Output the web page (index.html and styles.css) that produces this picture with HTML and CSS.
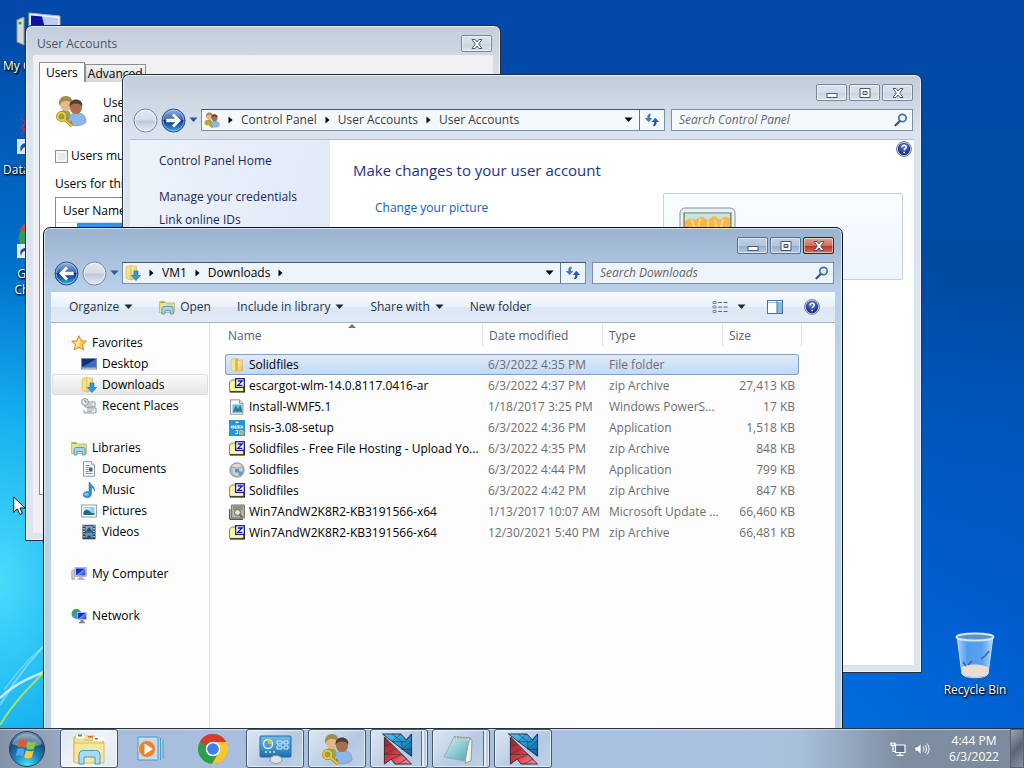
FILE: index.html
```
<!DOCTYPE html>
<html lang="en">
<head>
    <meta charset="UTF-8">
    <meta name="viewport" content="width=device-width, initial-scale=1.0">
    <title>Desktop</title>
    <link rel="stylesheet" href="styles.css">
</head>
<body>

<!-- shared icons -->
<svg class="defs" aria-hidden="true">
    <defs>
        <linearGradient id="gFolder" x1="0" y1="0" x2="1" y2="1"><stop offset="0" stop-color="#fdf3b4"/><stop offset="1" stop-color="#e3bf4e"/></linearGradient>
        <linearGradient id="gBlue" x1="0" y1="0" x2="0" y2="1"><stop offset="0" stop-color="#6fc0ea"/><stop offset="1" stop-color="#1a6fb5"/></linearGradient>
        <linearGradient id="gScreen" x1="0" y1="0" x2="1" y2="1"><stop offset="0" stop-color="#0a1fb0"/><stop offset="0.45" stop-color="#1733c8"/><stop offset="0.5" stop-color="#6d8ff0"/><stop offset="1" stop-color="#1d2fae"/></linearGradient>
        <linearGradient id="gNav" x1="0" y1="0" x2="0" y2="1"><stop offset="0" stop-color="#9ab8dc"/><stop offset="0.45" stop-color="#3a67b0"/><stop offset="0.5" stop-color="#0d2f86"/><stop offset="1" stop-color="#36b4f0"/></linearGradient>
        <linearGradient id="gNavOff" x1="0" y1="0" x2="0" y2="1"><stop offset="0" stop-color="#e4eaf1"/><stop offset="0.48" stop-color="#d3dce7"/><stop offset="0.52" stop-color="#bdc9d7"/><stop offset="1" stop-color="#e6edf5"/></linearGradient>
        <radialGradient id="gHelp" cx="0.5" cy="0.3" r="0.7"><stop offset="0" stop-color="#5f7fe0"/><stop offset="1" stop-color="#16237e"/></radialGradient>
        <radialGradient id="gOrb" cx="0.5" cy="0.95" r="0.95"><stop offset="0" stop-color="#4fe0ff"/><stop offset="0.4" stop-color="#1686bd"/><stop offset="0.75" stop-color="#1c4c77"/><stop offset="1" stop-color="#7c9cb8"/></radialGradient>
        <linearGradient id="gNote" x1="0" y1="0" x2="1" y2="1"><stop offset="0" stop-color="#d9f1f2"/><stop offset="1" stop-color="#4fa5b5"/></linearGradient>
        <linearGradient id="gGlass" x1="0" y1="0" x2="1" y2="0"><stop offset="0" stop-color="#a9d0f8"/><stop offset="0.3" stop-color="#4f9cec"/><stop offset="0.7" stop-color="#5aa2ee"/><stop offset="1" stop-color="#b8dafa"/></linearGradient>
        <linearGradient id="gBirdBlue" x1="0" y1="0" x2="1" y2="1"><stop offset="0" stop-color="#5ccdf2"/><stop offset="0.5" stop-color="#1f9ad6"/><stop offset="1" stop-color="#12578f"/></linearGradient>
        <linearGradient id="gBirdRed" x1="0" y1="0" x2="1" y2="1"><stop offset="0" stop-color="#8e2230"/><stop offset="0.5" stop-color="#dc3540"/><stop offset="1" stop-color="#f597a0"/></linearGradient>
    </defs>
    <symbol id="i-back" viewBox="0 0 25 25">
        <circle cx="12.5" cy="12.5" r="11.5" fill="url(#gNav)" stroke="#2c4f82"/>
        <circle cx="12.5" cy="12.5" r="10.3" fill="none" stroke="#a8c8ea" stroke-opacity=".7"/>
        <path d="M5 12.5l7-7 2 2-3.300 3.300h9v3.400h-9l3.300 3.300-2 2z" fill="#fff"/>
    </symbol>
    <symbol id="i-fwd" viewBox="0 0 25 25">
        <circle cx="12.5" cy="12.5" r="11.5" fill="url(#gNav)" stroke="#2c4f82"/>
        <circle cx="12.5" cy="12.5" r="10.3" fill="none" stroke="#a8c8ea" stroke-opacity=".7"/>
        <path d="M20 12.5l-7-7-2 2 3.300 3.300h-9v3.400h9L11 17.500l2 2z" fill="#fff"/>
    </symbol>
    <symbol id="i-off" viewBox="0 0 25 25">
        <circle cx="12.5" cy="12.5" r="11.5" fill="url(#gNavOff)" stroke="#75859a"/>
        <circle cx="12.5" cy="12.5" r="10.3" fill="none" stroke="#fff" stroke-opacity=".6"/>
    </symbol>
    <symbol id="i-down" viewBox="0 0 9 6"><path d="M.5.5h8l-4 4.500z"/></symbol>
    <symbol id="i-arrow" viewBox="0 0 5 8"><path d="M.5.5v7l4-3.500z" fill="#000"/></symbol>
    <symbol id="i-refresh" viewBox="0 0 16 14">
        <path d="M6.500.8C3.800.8 3.300 2.500 3.300 5H.7l4 4.200L8.300 5H6c0-1.700 0-2.500.9-2.500z" fill="#3f7fc4"/>
        <path d="M9.200 13.200c2.700 0 3.400-1.700 3.400-4.200h2.600l-4-4.200L7.700 9h2.500c0 1.600-.2 2.500-1 2.500z" fill="#2b5ca4"/>
    </symbol>
    <symbol id="i-search" viewBox="0 0 14 14">
        <circle cx="8.500" cy="5" r="3.700" fill="#e8f4fc" stroke="#3e74a8" stroke-width="1.700"/>
        <path d="M5.800 7.900L1.500 12.300" stroke="#3b5785" stroke-width="2.200" stroke-linecap="round"/>
    </symbol>
    <symbol id="i-help" viewBox="0 0 16 16">
        <circle cx="8" cy="8" r="7.400" fill="#d9dfea" stroke="#6e7a92"/>
        <circle cx="8" cy="8" r="6.200" fill="url(#gHelp)"/>
        <path d="M5.900 6.400c0-2.900 4.300-2.700 4.300-.2 0 1.500-2 1.500-2 3M8.200 10.700v1.500" fill="none" stroke="#fff" stroke-width="1.500"/>
    </symbol>
    <symbol id="i-users" viewBox="0 0 32 32">
        <path d="M4 24c0-7 2-9 6-9s6 2 6 9c-3 3-9 3-12 0z" fill="#7fae5c"/>
        <path d="M5 9c0-5 3-7 6-7s6 2 6 7c0 3-2 7-6 7s-6-4-6-7z" fill="#e3b98c"/>
        <path d="M4 11C3 4 7 1 11 1s8 3 6 10c-1-4-3-5-6-5s-5 1-7 5z" fill="#a58a4c"/>
        <path d="M13 29c0-8 3-11 9-11s9 3 9 9c-2 4-14 5-18 2z" fill="#8fb6e8" stroke="#5f88c0" stroke-width=".6"/>
        <path d="M15 12c0-4 3-6 6-6s6 2 6 6-2 7-6 7-6-3-6-7z" fill="#a8704a"/>
        <path d="M14.500 12c-.5-5 3-7.500 6.500-7.500s7 2.500 6.200 7C26 9.500 24 8.500 21 8.500s-4.500.5-6.500 3.500z" fill="#4b3c36"/>
        <circle cx="6.500" cy="21.500" r="3.800" fill="none" stroke="#b07f14" stroke-width="3.200"/>
        <path d="M9 24l8 7M14 29l2.500-2.500" stroke="#b07f14" stroke-width="3"/>
        <circle cx="6.500" cy="21.500" r="3.800" fill="none" stroke="#f4c33a" stroke-width="2"/>
        <path d="M9 24l8 7" stroke="#f4c33a" stroke-width="1.800"/>
    </symbol>
    <symbol id="i-folder" viewBox="0 0 16 16">
        <path d="M2 2.500l4.500-1v13L2 13z" fill="#f8e592" stroke="#d7b64c" stroke-width=".5"/>
        <path d="M6.500 1.500h2.800l1 12-3.800 1z" fill="#dcb541"/>
        <path d="M8.500 3.500l5-.8v10.800l-5 1.300z" fill="url(#gFolder)" stroke="#cfae45" stroke-width=".5"/>
    </symbol>
    <symbol id="i-download" viewBox="0 0 16 16">
        <path d="M1 1.500l5-1V15l-5-1.200z" fill="#f5e08a" stroke="#d0aa40" stroke-width=".5"/>
        <path d="M6 .5l5.500.8v12.500L6 15z" fill="url(#gFolder)" stroke="#d0aa40" stroke-width=".5"/>
        <path d="M9 6h4v4.500h2.500L11 15.500l-4.500-5H9z" fill="#2f9be0" stroke="#1866a0" stroke-width=".6"/>
    </symbol>
    <symbol id="i-library" viewBox="0 0 16 16">
        <path d="M.6 2.500h5l1 1.500h8.800v9.500H.6z" fill="#f4e28c" stroke="#c0a344" stroke-width=".7"/>
        <path d="M1.500 3h3.500l.8 1H1.500z" fill="#62b34c"/>
        <path d="M7 5h7.500v3H7z" fill="#c4e2a5"/>
        <path d="M3 15V9.500C3 8 4 7.500 5 7.500h7c1.500 0 2.200.8 2.200 2V15h-2.800v-3.500H6V15z" fill="#a0d4ef" stroke="#468fb5" stroke-width=".8"/>
    </symbol>
    <symbol id="i-star" viewBox="0 0 16 16">
        <path d="M8 .8l2.200 4.900 5.200.5-3.900 3.500 1.200 5.300L8 12.200 3.300 15l1.200-5.300L.6 6.200l5.200-.5z" fill="#ffc94a" stroke="#d4792b" stroke-width=".9"/>
        <path d="M8 3l1.300 3.500L8 11 4.600 13l1-3.700L3 7.200l3.400-.5z" fill="#ffe99a"/>
    </symbol>
    <symbol id="i-desktop" viewBox="0 0 16 16">
        <rect x=".5" y="2.500" width="15" height="10.500" fill="#3a6cc8" stroke="#7d8da3"/>
        <path d="M1 3h14L4 9.500l-3 1z" fill="#15306e"/>
        <rect x="1" y="11.500" width="14" height="1.500" fill="#a9b8c9"/>
    </symbol>
    <symbol id="i-recent" viewBox="0 0 16 16">
        <path d="M4 4h10v5H4zM6 10h9v5H3v-3" fill="#f2f4f6" stroke="#8f979f"/>
        <path d="M6.500 6h5M6.500 8h6M6 12h7M6 13.500h5" stroke="#a3abb3"/>
        <circle cx="4" cy="4" r="3.400" fill="#e9edf1" stroke="#808a94" stroke-width=".9"/>
        <path d="M4 2v2h1.700" stroke="#59636d" fill="none" stroke-width=".8"/>
    </symbol>
    <symbol id="i-doc" viewBox="0 0 16 16">
        <path d="M2.500.8h8l3 3v11.400h-11z" fill="#fbfcfd" stroke="#8b959f"/>
        <path d="M10.500.8v3h3" fill="#dde4ea" stroke="#8b959f" stroke-width=".7"/>
        <path d="M4.500 4.500h4M4.500 6.500h3M4.500 8.500h3M4.500 10.500h3M4.500 12.500h7" stroke="#808b95"/>
        <rect x="8" y="6.500" width="3.500" height="4" fill="#4c5d6e"/>
    </symbol>
    <symbol id="i-music" viewBox="0 0 16 16">
        <path d="M9 .3c.3 3 5 3.500 4.500 8.700-.7-2.300-1.600-3.200-3-3.500v6.200c0 5-8.300 5-8.300 1.200 0-2.600 3.400-4 5.800-2.900V.3z" fill="#2f8fd8" stroke="#1d65a8" stroke-width=".5"/>
        <ellipse cx="5.500" cy="12.300" rx="2.400" ry="1.500" fill="#7fc4ef"/>
    </symbol>
    <symbol id="i-picture" viewBox="0 0 16 16">
        <rect x=".6" y="2" width="14.800" height="12" fill="#fff" stroke="#8d9aa7"/>
        <rect x="2.500" y="4" width="11" height="8" fill="#8fd0ee"/>
        <path d="M2.500 9c3-3 5-2 7 0s3 1 4 1v2h-11z" fill="#1d6f80"/>
        <path d="M2.500 6.500c3-2 5-1 7 0" stroke="#fff" fill="none"/>
    </symbol>
    <symbol id="i-video" viewBox="0 0 16 16">
        <rect x="1.500" y=".8" width="13" height="14.500" fill="#2f3c4b"/>
        <rect x="4.300" y="1.800" width="7.400" height="5.600" fill="#6dabdc"/>
        <rect x="4.300" y="8.600" width="7.400" height="5.600" fill="#5596cc"/>
        <path d="M3 1.500v13M13 1.500v13" stroke="#e4eaf0" stroke-width="1.300" stroke-dasharray="1.300 1.300"/>
        <path d="M5 7l3-4 3 4M5 14l3-3 3 3" fill="#2b4a6b"/>
    </symbol>
    <symbol id="i-computer" viewBox="0 0 16 16">
        <path d="M.8 4.500l2.500-.8v10L.8 13z" fill="#cfd3c8" stroke="#888d86" stroke-width=".6"/>
        <rect x="4" y="1.500" width="11.500" height="9" fill="#dfe3ea" stroke="#8c95a6" stroke-width=".6"/>
        <rect x="5" y="2.500" width="9.500" height="7" fill="url(#gScreen)"/>
        <path d="M8 10.500h4v2h2v1.500H6.500v-1.500H8z" fill="#b4bac4"/>
    </symbol>
    <symbol id="i-network" viewBox="0 0 16 16">
        <circle cx="5.500" cy="6" r="5" fill="#3d9bd0"/>
        <path d="M2 3c2-3 5-2 6-1L6 4 4 7 2 8 1 5zM5 8l3 1-1 2z" fill="#3aa352"/>
        <rect x="6.500" y="4.500" width="9" height="7" fill="url(#gScreen)" stroke="#c3cad6" stroke-width=".8"/>
        <path d="M9.500 12h3v2h1.500v1.200H8V14h1.500z" fill="#6c7ba0"/>
    </symbol>
    <symbol id="i-zip" viewBox="0 0 16 16">
        <path d="M.6 4l2-2h4v2h8v9.400H.6z" fill="#fbf9a0" stroke="#77773a" stroke-width=".9"/>
        <path d="M1 14h14.300V5" fill="none" stroke="#000" stroke-width="1.100"/>
        <rect x="6.600" y=".7" width="8.700" height="8.700" fill="#fff" stroke="#1a1a9a" stroke-width="1.300"/>
        <path d="M8.700 3h4.500L8.800 7.300h4.600" fill="none" stroke="#1616a8" stroke-width="1.300"/>
    </symbol>
    <symbol id="i-script" viewBox="0 0 16 16">
        <path d="M1.500.8h9l3.500 3.500v11H1.500z" fill="#f4f7fa" stroke="#8f9ba8"/>
        <path d="M10.500.8v3.500H14" fill="none" stroke="#8f9ba8"/>
        <rect x="3.500" y="5.500" width="10" height="8.500" fill="#79bdd0"/>
        <path d="M4.500 13l2.500-5 2 4 2-4 1.800 5M6 11.500h6" stroke="#21708c" fill="none" stroke-width="1.300"/>
    </symbol>
    <symbol id="i-nsis" viewBox="0 0 16 16">
        <rect width="16" height="16" fill="#2496d4"/>
        <path d="M8 1l2 2H6zM1.500 7l2-2v4zM14.500 7l-2-2v4z" fill="#fff"/>
        <path d="M4.500 8.500v-3l2 3v-3M8 5v4M9.500 8.500v-3M11 5v4M6.500 10.500h2.500l-1 1.500 1 1.500H6" stroke="#e8f6ff" fill="none"/>
        <circle cx="12.500" cy="12.500" r="2.300" fill="#8fb59a" stroke="#d6d28a" stroke-width=".8"/>
    </symbol>
    <symbol id="i-globe" viewBox="0 0 16 16">
        <circle cx="8" cy="8" r="7.300" fill="#a8b4bb" stroke="#858f96" stroke-width=".7"/>
        <path d="M3 4c3-3 7-3 10 0-3 1.500-7 1.500-10 0z" fill="#ead8cf"/>
        <path d="M3 6.500h10v5c-2 3-7 3-9 0z" fill="#c9d5da"/>
        <path d="M6 7h4v3.500H6z" fill="#6b8ea3"/>
        <path d="M10 9l4 1-2.500 4-2-1z" fill="#58a2b8"/>
    </symbol>
    <symbol id="i-update" viewBox="0 0 16 16">
        <path d="M2.500 1h13v13h-13z" fill="#b3b3a4" stroke="#77776c"/>
        <path d="M.8 5v10.200H14" fill="none" stroke="#111"/>
        <path d="M4 3h10M4 5h10" stroke="#6e6e66"/>
        <circle cx="8.500" cy="8.500" r="3" fill="#e4e4da" stroke="#66665e"/>
        <path d="M10.500 10.500l3 3" stroke="#55554e" stroke-width="1.500"/>
    </symbol>
    <symbol id="i-views" viewBox="0 0 16 13">
        <path d="M1 .5h3v2H1zM1 5h3v2H1zM1 9.500h3v2H1z" fill="#e7eef6" stroke="#6b7d93" stroke-width=".9"/>
        <path d="M6 1.500h4M11.500 1.500h4M6 6h4M11.500 6h4M6 10.500h4M11.500 10.500h4" stroke="#566980" stroke-width="1.100"/>
    </symbol>
    <symbol id="i-pane" viewBox="0 0 16 14">
        <rect x=".5" y=".5" width="15" height="13" fill="#fff" stroke="#4d6e96"/>
        <path d="M1 2.500h14" stroke="#9fb6cf"/>
        <rect x="10" y="3" width="5" height="10" fill="#7fbfdf"/>
        <path d="M10 1v12" stroke="#4d6e96"/>
    </symbol>
    <symbol id="i-nsis-bird" viewBox="0 0 32 33">
        <path d="M1 1h19l5.500 6L31 1v23z" fill="url(#gBirdBlue)"/>
        <path d="M3 4l28 28H14l-4-5-7 5z" fill="url(#gBirdRed)"/>
        <path d="M11 1l10 8M20 1l-9 8h14L31 1M21 9v8l10-9M21 17h10M3 13l7-1M3 22l12-6M3 22h18M10 27l11-5 5 5-9 5" fill="none" stroke="#22304a" stroke-width=".6"/>
        <path d="M1 1h19l5.500 6L31 1v23L1 1M3 4v28l7-5 4 5h17L3 4" fill="none" stroke="#23202c" stroke-width=".9"/>
    </symbol>
</svg>

<div class="desktop">
    <svg class="light" viewBox="0 0 60 190" aria-hidden="true">
        <path d="M0 160C18 143 36 137 60 128" stroke="#fff" stroke-opacity=".7" stroke-width="2.500" fill="none"/>
        <path d="M0 167C10 150 30 120 60 92" stroke="#fff" stroke-opacity=".35" stroke-width="2" fill="none"/>
        <path d="M4 152C22 128 36 112 56 100" stroke="#fff" stroke-opacity=".3" stroke-width="1.500" fill="none"/>
        <path d="M0 187C12 168 24 152 60 120" stroke="#b6e84c" stroke-opacity=".9" stroke-width="2" fill="none"/>
    </svg>

    <div class="shortcuts">
        <a href="#" class="shortcut plain">
            <svg viewBox="0 0 48 48"><path d="M4 10l7-3v28l-7-3z" fill="#d6d9ce" stroke="#8f948a"/><circle cx="7" cy="13" r="1.500" fill="#3c9a3c"/><path d="M16 3l31 3v28l-31-3z" fill="#eef2f8" stroke="#9fb0cf"/><path d="M18 5.500l27 2.500v23l-27-3z" fill="#b9cdf0"/><path d="M18 5.500l11 1 6 24-17-2z" fill="#0a14a0"/></svg>
            <span>My C</span>
        </a>
        <a href="#" class="shortcut plain">
            <svg viewBox="0 0 48 48"><path d="M8 4l8 8M15 4L9 14l7 7M8 20l6-8" stroke="#b0305a" stroke-width="1.500" fill="none"/><rect x="4" y="25" width="16" height="15" fill="#d5e6f6"/><path d="M8 38c-2-6 1-9 6-9v-3l5 5-5 5v-3c-3 0-5 1-6 5z" fill="#1f4f96"/></svg>
            <span>Data</span>
        </a>
        <a href="#" class="shortcut">
            <svg viewBox="0 0 48 48"><circle cx="27" cy="20" r="21" fill="#35a04a"/><path d="M7 13a21 21 0 0 1 39-1H27z" fill="#db4437"/><circle cx="27" cy="20" r="9" fill="#4285f4" stroke="#fff" stroke-width="2"/><rect x="4" y="26" width="15" height="14" fill="#e4edf6"/><path d="M8 38c-2-6 1-8 5-8v-3l5 5-5 4v-3c-3 0-4 1-5 5z" fill="#1f4f96"/></svg>
            <span>Google Chrome</span>
        </a>
    </div>

    <a href="#" class="shortcut bin">
        <svg viewBox="0 0 48 48">
            <path d="M6 4l5 38c2 5 24 5 26 0L42 4z" fill="url(#gGlass)" stroke="#c5dcf2"/>
            <path d="M10 36l1 6c2 4 24 4 26 0l1-6c-5-4-22-5-28 0z" fill="#e9dcd2"/>
            <path d="M12 30l3 4M17 33l4-4M34 24l4-5M30 27l4-3" stroke="#2f66b4" stroke-width="1.500"/>
            <ellipse cx="24" cy="5" rx="18.500" ry="3.500" fill="#5d93c8" stroke="#d5e8ea" stroke-width="2"/>
        </svg>
        <span>Recycle Bin</span>
    </a>

    <!-- User Accounts dialog -->
    <section class="window dialog" aria-label="User Accounts">
        <div class="titlebar">
            <h2>User Accounts</h2>
            <button class="cap" aria-label="Close"><svg viewBox="0 0 14 12"><path d="M2 1.500h3l2 2.500 2-2.500h3L8.700 6l3.300 4.500H9L7 8l-2 2.500H2L5.300 6z"/></svg></button>
        </div>
        <div class="dialog-body">
            <div class="tabs">
                <button class="tab active">Users</button>
                <button class="tab">Advanced</button>
            </div>
            <div class="tab-page">
                <div class="intro">
                    <svg><use href="#i-users"/></svg>
                    <p>Use<br>and</p>
                </div>
                <label class="check"><input type="checkbox"> Users must</label>
                <p class="list-label">Users for this</p>
                <div class="user-list">
                    <div class="list-head">User Name</div>
                    <div class="list-row"></div>
                </div>
            </div>
        </div>
    </section>

    <!-- Control Panel -->
    <section class="window control" aria-label="Control Panel">
        <div class="titlebar">
            <button class="cap" aria-label="Minimize"><svg viewBox="0 0 14 12"><rect x="2" y="6.500" width="10" height="4"/></svg></button>
            <button class="cap" aria-label="Maximize"><svg viewBox="0 0 14 12"><path d="M2 1.500h10v9H2zM5 4.500v3h4v-3z" fill-rule="evenodd"/></svg></button>
            <button class="cap" aria-label="Close"><svg viewBox="0 0 14 12"><path d="M2 1.500h3l2 2.500 2-2.500h3L8.700 6l3.300 4.500H9L7 8l-2 2.500H2L5.300 6z"/></svg></button>
        </div>
        <div class="navrow">
            <div class="travel">
                <button aria-label="Back"><svg><use href="#i-off"/></svg></button>
                <button aria-label="Forward"><svg><use href="#i-fwd"/></svg></button>
                <svg class="caret"><use href="#i-down"/></svg>
            </div>
            <nav class="address">
                <svg class="ico"><use href="#i-users"/></svg>
                <svg class="sep"><use href="#i-arrow"/></svg>
                <a href="#">Control Panel</a>
                <svg class="sep"><use href="#i-arrow"/></svg>
                <a href="#">User Accounts</a>
                <svg class="sep"><use href="#i-arrow"/></svg>
                <a href="#">User Accounts</a>
                <svg class="caret drop"><use href="#i-down"/></svg>
                <button class="refresh" aria-label="Refresh"><svg><use href="#i-refresh"/></svg></button>
            </nav>
            <div class="search">
                <input type="text" placeholder="Search Control Panel" aria-label="Search Control Panel">
                <svg><use href="#i-search"/></svg>
            </div>
        </div>
        <div class="client control-client">
            <aside class="tasks">
                <a href="#">Control Panel Home</a>
                <a href="#" class="first">Manage your credentials</a>
                <a href="#">Link online IDs</a>
            </aside>
            <div class="account">
                <svg class="help"><use href="#i-help"/></svg>
                <div class="account-main">
                    <div>
                        <h1>Make changes to your user account</h1>
                        <a href="#">Change your picture</a>
                    </div>
                    <div class="tile">
                        <svg viewBox="0 0 60 60">
                            <rect x="2" y="1" width="55" height="56" rx="5" fill="#e9f1f3" stroke="#7f969c"/>
                            <rect x="6" y="6" width="47" height="46" fill="#f6b64e" stroke="#4e6d72"/>
                            <path d="M7 6.500h45v5l-5-2-5 3-6-4-6 5-6-4-7 3-6-1-4 3z" fill="#c4e6e2"/>
                            <path d="M14 13l3 10M22 12l-2 12M30 14v10M37 13l2 11M45 12l-3 12" stroke="#ffd98c" stroke-width="2" fill="none"/>
                        </svg>
                    </div>
                </div>
            </div>
        </div>
    </section>

    <!-- Explorer -->
    <section class="window explorer" aria-label="Downloads">
        <div class="titlebar">
            <button class="cap" aria-label="Minimize"><svg viewBox="0 0 14 12"><rect x="2" y="6.500" width="10" height="4"/></svg></button>
            <button class="cap" aria-label="Maximize"><svg viewBox="0 0 14 12"><path d="M2 1.500h10v9H2zM5 4.500v3h4v-3z" fill-rule="evenodd"/></svg></button>
            <button class="cap close" aria-label="Close"><svg viewBox="0 0 14 12"><path d="M2 1.500h3l2 2.500 2-2.500h3L8.700 6l3.300 4.500H9L7 8l-2 2.500H2L5.300 6z"/></svg></button>
        </div>
        <div class="navrow">
            <div class="travel">
                <button aria-label="Back"><svg><use href="#i-back"/></svg></button>
                <button aria-label="Forward"><svg><use href="#i-off"/></svg></button>
                <svg class="caret"><use href="#i-down"/></svg>
            </div>
            <nav class="address">
                <svg class="ico"><use href="#i-download"/></svg>
                <svg class="sep"><use href="#i-arrow"/></svg>
                <a href="#">VM1</a>
                <svg class="sep"><use href="#i-arrow"/></svg>
                <a href="#">Downloads</a>
                <svg class="sep"><use href="#i-arrow"/></svg>
                <svg class="caret drop"><use href="#i-down"/></svg>
                <button class="refresh" aria-label="Refresh"><svg><use href="#i-refresh"/></svg></button>
            </nav>
            <div class="search">
                <input type="text" placeholder="Search Downloads" aria-label="Search Downloads">
                <svg><use href="#i-search"/></svg>
            </div>
        </div>
        <div class="client">
            <div class="toolbar">
                <button>Organize <svg class="caret"><use href="#i-down"/></svg></button>
                <button><svg class="ico"><use href="#i-library"/></svg> Open</button>
                <button>Include in library <svg class="caret"><use href="#i-down"/></svg></button>
                <button>Share with <svg class="caret"><use href="#i-down"/></svg></button>
                <button>New folder</button>
                <div class="toolbar-right">
                    <button aria-label="Change view"><svg class="views"><use href="#i-views"/></svg><svg class="caret"><use href="#i-down"/></svg></button>
                    <button aria-label="Preview pane"><svg class="pane"><use href="#i-pane"/></svg></button>
                    <button aria-label="Help"><svg class="ico"><use href="#i-help"/></svg></button>
                </div>
            </div>
            <div class="split">
                <nav class="tree">
                    <a href="#"><svg><use href="#i-star"/></svg>Favorites</a>
                    <a href="#" class="sub"><svg><use href="#i-desktop"/></svg>Desktop</a>
                    <a href="#" class="sub current"><svg><use href="#i-download"/></svg>Downloads</a>
                    <a href="#" class="sub last"><svg><use href="#i-recent"/></svg>Recent Places</a>
                    <a href="#"><svg><use href="#i-library"/></svg>Libraries</a>
                    <a href="#" class="sub"><svg><use href="#i-doc"/></svg>Documents</a>
                    <a href="#" class="sub"><svg><use href="#i-music"/></svg>Music</a>
                    <a href="#" class="sub"><svg><use href="#i-picture"/></svg>Pictures</a>
                    <a href="#" class="sub last"><svg><use href="#i-video"/></svg>Videos</a>
                    <a href="#" class="last"><svg><use href="#i-computer"/></svg>My Computer</a>
                    <a href="#"><svg><use href="#i-network"/></svg>Network</a>
                </nav>
                <div class="files">
                    <table>
                        <thead>
                            <tr><th class="name sorted">Name</th><th class="date">Date modified</th><th class="type">Type</th><th class="size">Size</th></tr>
                        </thead>
                        <tbody>
                            <tr class="selected"><td><svg><use href="#i-folder"/></svg>Solidfiles</td><td>6/3/2022 4:35 PM</td><td>File folder</td><td></td></tr>
                            <tr><td><svg><use href="#i-zip"/></svg>escargot-wlm-14.0.8117.0416-ar</td><td>6/3/2022 4:37 PM</td><td>zip Archive</td><td>27,413 KB</td></tr>
                            <tr><td><svg><use href="#i-script"/></svg>Install-WMF5.1</td><td>1/18/2017 3:25 PM</td><td>Windows PowerS...</td><td>17 KB</td></tr>
                            <tr><td><svg><use href="#i-nsis"/></svg>nsis-3.08-setup</td><td>6/3/2022 4:36 PM</td><td>Application</td><td>1,518 KB</td></tr>
                            <tr><td><svg><use href="#i-zip"/></svg>Solidfiles - Free File Hosting - Upload Yo...</td><td>6/3/2022 4:35 PM</td><td>zip Archive</td><td>848 KB</td></tr>
                            <tr><td><svg><use href="#i-globe"/></svg>Solidfiles</td><td>6/3/2022 4:44 PM</td><td>Application</td><td>799 KB</td></tr>
                            <tr><td><svg><use href="#i-zip"/></svg>Solidfiles</td><td>6/3/2022 4:42 PM</td><td>zip Archive</td><td>847 KB</td></tr>
                            <tr><td><svg><use href="#i-update"/></svg>Win7AndW2K8R2-KB3191566-x64</td><td>1/13/2017 10:07 AM</td><td>Microsoft Update ...</td><td>66,460 KB</td></tr>
                            <tr><td><svg><use href="#i-zip"/></svg>Win7AndW2K8R2-KB3191566-x64</td><td>12/30/2021 5:40 PM</td><td>zip Archive</td><td>66,481 KB</td></tr>
                        </tbody>
                    </table>
                </div>
            </div>
        </div>
    </section>

    <svg class="cursor" viewBox="0 0 13 20" aria-hidden="true"><path d="M.7 1v15.300l3.700-3.400 2.400 5.600 2.600-1.100L7 12h5z" fill="#fff" stroke="#111"/></svg>
</div>

<footer class="taskbar">
    <button class="start" aria-label="Start">
        <svg viewBox="0 0 38 38">
            <circle cx="19" cy="19" r="17.500" fill="url(#gOrb)" stroke="#27405c"/>
            <path d="M4 14a16 16 0 0 1 30 0c-8 4-22 4-30 0z" fill="#fff" fill-opacity=".35"/>
            <path d="M11.500 10.500c2.500-1.500 5-1.300 7.300.2L17 18c-2.500-1.600-4.800-1.600-7.300-.3z" fill="#e8572a"/>
            <path d="M20 11.300c2.500 1.500 5 1.600 7.800.2L26 18.800c-2.700 1.300-5.200 1.300-7.700-.3z" fill="#8cc63e"/>
            <path d="M9.300 19.200c2.600-1.300 5-1.200 7.400.3l-1.800 7.200c-2.400-1.500-4.900-1.500-7.400-.2z" fill="#4aa7e8"/>
            <path d="M18 20.200c2.500 1.500 5 1.500 7.700.2l-1.900 7.200c-2.600 1.300-5.200 1.300-7.600-.2z" fill="#ffc832"/>
        </svg>
    </button>
    <nav class="tasklist">
        <button class="task open active" aria-label="Windows Explorer">
            <svg viewBox="0 0 36 32">
                <path d="M3 4h9l2 3h18v22H3z" fill="#f6e193" stroke="#c8a84c"/>
                <path d="M5 1h9v5H5z" fill="#fff" stroke="#c2c9a0" stroke-width=".6"/><path d="M7 1.500h4v2H7z" fill="#3aa840"/>
                <path d="M15 2h9v5h-9z" fill="#f0d98a"/><path d="M17 3h5v1.500h-5z" fill="#d96a3a"/>
                <path d="M22 4h10v4H22z" fill="#fff"/><path d="M24 5h3v1.500h-3z" fill="#3c7fd0"/>
                <path d="M3 10h30v20H3z" fill="#f8e69c" stroke="#d2b257" stroke-width=".8"/>
                <path d="M8 31V22c0-3 1.500-4.500 4.500-4.500h12c3 0 4.500 1.500 4.500 4.500v9h-5v-7H13v7z" fill="#a8dcf6" stroke="#4597c4"/>
            </svg>
        </button>
        <button class="task" aria-label="Media Player">
            <svg viewBox="0 0 36 32">
                <path d="M24 6h6v20h-6z" fill="#a9d3ec"/>
                <path d="M5 4h20v23H5z" fill="#bfe0f4" stroke="#4d97c6"/><path d="M27.500 5v22M30 6v20" stroke="#4d97c6"/>
                <circle cx="14" cy="16" r="8.500" fill="#f0812a" stroke="#d9d0c4"/><path d="M11.500 10.500v11l8.500-5.500z" fill="#fff"/>
            </svg>
        </button>
        <button class="task" aria-label="Chrome">
            <svg viewBox="0 0 36 32">
                <circle cx="18" cy="16" r="15" fill="#2e9e4a"/>
                <path d="M18 16L5 8.500A15 15 0 0 1 31 8.500z" fill="#d93a2c"/><path d="M5 8.500A15 15 0 0 1 18 1v8z" fill="#d93a2c"/>
                <path d="M18 9h13.300A15 15 0 0 1 17 31l7-12z" fill="#fbc530"/>
                <circle cx="18" cy="16" r="7.300" fill="#fff"/><circle cx="18" cy="16" r="5.800" fill="#3f7fe8"/>
            </svg>
        </button>
        <button class="task open" aria-label="Control Panel">
            <svg viewBox="0 0 36 32">
                <rect x="3" y="3" width="31" height="21" rx="1" fill="url(#gBlue)" stroke="#2d6797"/>
                <circle cx="11" cy="11" r="4.500" fill="none" stroke="#d4efff" stroke-width="1.500"/><path d="M11 11V6a5 5 0 0 1 4 5z" fill="#f7b440"/>
                <path d="M20 8h5v3h-5zM27 8h4v3h-4zM20 13h5v3h-5zM27 13h4v3h-4z" fill="none" stroke="#d4efff"/>
                <path d="M8 19h2M12 19h2M16 19h2" stroke="#ffe37a" stroke-width="1.500"/>
                <ellipse cx="19" cy="26.500" rx="6" ry="4" fill="#dfe2e6" stroke="#8b939c"/>
            </svg>
        </button>
        <button class="task open" aria-label="User Accounts"><svg><use href="#i-users"/></svg></button>
        <button class="task open stack" aria-label="NSIS"><svg><use href="#i-nsis-bird"/></svg></button>
        <button class="task open stack" aria-label="Notepad">
            <svg viewBox="0 0 36 32">
                <path d="M28 5l3 2-1 21-6 2z" fill="#f4f2e6" stroke="#7f7f62" stroke-width=".7"/>
                <path d="M13 4l16 1-6 23L3 24z" fill="url(#gNote)" stroke="#7aa5ad" stroke-width=".7"/>
                <path d="M13 4l16 1-1 2.500-16-1z" fill="#c4cdcd"/>
                <path d="M14 3v2M17 3.200v2M20 3.400v2M23 3.600v2M26 3.800v2M29 4v2" stroke="#6c7474" stroke-width=".8"/>
            </svg>
        </button>
        <button class="task open" aria-label="NSIS setup"><svg><use href="#i-nsis-bird"/></svg></button>
    </nav>
    <div class="tray">
        <svg viewBox="0 0 16 14"><path d="M5.500 3h9.500v7.500H5.500z" fill="#5f7186" stroke="#fff" stroke-width="1.200"/><path d="M10 11v2M6.500 13.300h7" stroke="#fff" stroke-width="1.200"/><path d="M1 .5v3h4v-3M3 3.500v6h2.500M2 .5v2M4 .5v2" stroke="#fff" fill="none" stroke-width="1.100"/></svg>
        <svg viewBox="0 0 16 14"><path d="M1 5h2.500L7 1.500v11L3.500 9H1z" fill="#fff" stroke="#4d5b6b" stroke-width=".5"/><path d="M9 4.500c1.200 1.500 1.200 3.500 0 5M11 3c2 2.500 2 5.500 0 8M13 1.500c2.700 3.500 2.700 7.500 0 11" stroke="#fff" fill="none"/></svg>
        <div class="clock"><time>4:44 PM</time><time>6/3/2022</time></div>
    </div>
    <button class="peek" aria-label="Show desktop"></button>
</footer>

</body>
</html>
```
FILE: styles.css
```
* {
    box-sizing: border-box;
}
body {
    margin: 0;
    height: 100vh;
    display: flex;
    flex-direction: column;
    overflow: hidden;
    font-family: "Open Sans", "Noto Sans", sans-serif;
    font-size: 12px;
    line-height: 16px;
    color: #000;
}
h1, h2, p {
    margin: 0;
    font-weight: normal;
}
a {
    color: inherit;
    text-decoration: none;
}
button, input {
    font: inherit;
    color: inherit;
    padding: 0;
    border: 0;
    background: none;
}
svg {
    display: block;
    flex: none;
}
.defs {
    position: absolute;
    width: 0;
    height: 0;
}

/* Desktop */
.desktop {
    position: relative;
    flex: 1;
    overflow: hidden;
    background:
        radial-gradient(ellipse 340px 560px at 0 580px, #48dcfa 0%, rgba(24, 184, 246, 0.9) 30%, rgba(0, 140, 232, 0.6) 55%, rgba(0, 110, 215, 0) 100%),
        radial-gradient(ellipse 900px 520px at 640px 760px, #0078ea 0%, rgba(0, 96, 212, 0.7) 50%, rgba(0, 72, 168, 0) 100%),
        linear-gradient(#0349a9, #004ba2 40%, #0059c4);
}
.light {
    position: absolute;
    left: 0;
    bottom: 0;
    width: 60px;
    height: 190px;
}
.shortcuts {
    position: absolute;
    top: 10px;
    left: 0;
    width: 74px;
    display: flex;
    flex-direction: column;
    gap: 40px;
}
.shortcut {
    display: flex;
    flex-direction: column;
    align-items: center;
    height: 64px;
    text-align: center;
    color: #fff;
    text-shadow: 0 1px 2px #000, 1px 1px 2px #000;
}
.shortcut svg {
    width: 48px;
    height: 48px;
}
.shortcut.plain span {
    align-self: flex-start;
    padding-left: 3px;
}
.bin {
    position: absolute;
    right: 12px;
    bottom: 30px;
    width: 74px;
    height: auto;
    gap: 2px;
}

/* Windows */
.window {
    position: absolute;
    display: flex;
    flex-direction: column;
    padding: 0 7px 7px;
    border: 1px solid #25303e;
    border-radius: 7px 7px 0 0;
    background: linear-gradient(#c3cedb, #dbe4ee 60px, #dce5ef);
    box-shadow: inset 0 0 0 1px rgba(255, 255, 255, 0.6);
}
.dialog {
    top: 25px;
    left: 25px;
    width: 476px;
    height: 516px;
}
.control {
    top: 74px;
    left: 122px;
    width: 800px;
    height: 599px;
}
.explorer {
    top: 227px;
    left: 43px;
    width: 800px;
    bottom: -9px;
    border-color: #10161f;
    background: linear-gradient(#9bb3cf, #b8cfea 60px, #bcd2ea 140px, #b9d1ea);
}
.titlebar {
    display: flex;
    justify-content: flex-end;
    gap: 2px;
    height: 34px;
    padding: 9px 1px 0;
}
.dialog .titlebar {
    height: 29px;
}
.titlebar h2 {
    margin-right: auto;
    padding-left: 3px;
    font-size: 12px;
    line-height: 18px;
    color: #4c545e;
}
.cap {
    width: 31px;
    height: 17px;
    display: flex;
    align-items: center;
    justify-content: center;
    border: 1px solid #76869c;
    border-radius: 2px;
    background: linear-gradient(#dbe3ec, #d2dce8 50%, #c8d3e0 51%, #dae3ed);
    box-shadow: inset 0 0 0 1px rgba(255, 255, 255, 0.5);
}
.cap svg {
    width: 14px;
    height: 12px;
    fill: #fff;
    stroke: #4d5868;
    stroke-width: 1;
}
.explorer .cap {
    border-color: #56708f;
    background: linear-gradient(#bfd0e6, #b0c5df 50%, #93acca 51%, #b3cbe6);
}
.explorer .close {
    border-color: #5a1414;
    background: linear-gradient(#e3a194, #d0705e 50%, #b83224 51%, #d3715a);
}
.navrow {
    display: flex;
    height: 22px;
    margin: 0 1px 8px 0;
}
.travel {
    display: flex;
    align-items: center;
    gap: 3px;
    width: 71px;
    padding-left: 3px;
}
.travel button svg {
    width: 25px;
    height: 25px;
}
.caret {
    width: 9px;
    height: 6px;
    fill: #1c2838;
}
.travel .caret {
    fill: #245a94;
}
.address {
    flex: 1;
    display: flex;
    align-items: center;
    gap: 8px;
    margin-right: 6px;
    padding-left: 2px;
    border: 1px solid #7a8fa8;
    border-top-color: #44566b;
    background: #eef4fb;
    white-space: nowrap;
}
.control .address {
    background: #f5f9fd;
    color: #3c3c3c;
}
.address .sep {
    width: 5px;
    height: 8px;
}
.ico, .address .ico {
    width: 16px;
    height: 16px;
}
.drop {
    margin-left: auto;
    fill: #000;
}
.refresh {
    align-self: stretch;
    width: 25px;
    display: flex;
    align-items: center;
    justify-content: center;
    border-left: 1px solid #5f7590;
    margin-left: -2px;
}
.refresh svg {
    width: 16px;
    height: 14px;
}
.search {
    width: 242px;
    display: flex;
    align-items: center;
    padding: 0 4px 0 7px;
    border: 1px solid #7a8fa8;
    background: #eef4fb;
}
.control .search {
    background: #f5f9fd;
}
.search input {
    flex: 1;
    min-width: 0;
    outline: 0;
}
.search input::placeholder {
    color: #666;
    font-style: italic;
}
.search svg {
    width: 14px;
    height: 14px;
}
.client {
    flex: 1;
    display: flex;
    flex-direction: column;
    min-height: 0;
    background: #fdfdfe;
}

/* User Accounts dialog */
.dialog-body {
    flex: 1;
    display: flex;
    flex-direction: column;
    padding: 7px 6px 38px;
    background: #f0f0f0;
    white-space: nowrap;
    overflow: hidden;
}
.tabs {
    display: flex;
    align-items: flex-end;
}
.tab {
    height: 18px;
    padding: 0 2px;
    border: 1px solid #8a8e95;
    border-bottom: 0;
    background: linear-gradient(#f3f3f3, #d6d6d6);
}
.tab.active {
    height: 20px;
    padding: 0 6px;
    background: #fff;
}
.tab-page {
    flex: 1;
    padding: 13px 15px;
    border: 1px solid #8a8e95;
    border-top: 0;
    background: #fff;
}
.intro {
    display: flex;
    gap: 16px;
}
.intro svg {
    width: 32px;
    height: 32px;
}
.intro p {
    line-height: 15px;
}
.check {
    display: flex;
    align-items: center;
    gap: 3px;
    margin-top: 21px;
}
.check input {
    appearance: none;
    width: 13px;
    height: 13px;
    margin: 0;
    border: 1px solid #8e8f8f;
    background: #e6e8ea;
    box-shadow: inset 0 0 0 2px #f6f6f6;
}
.list-label {
    margin-top: 12px;
}
.user-list {
    margin-top: 5px;
    border: 1px solid #828790;
}
.list-head {
    height: 25px;
    padding: 5px 7px;
    border-bottom: 1px solid #dde3ea;
}
.list-row {
    height: 17px;
    margin-left: 21px;
    background: #3390e8;
}

/* Control Panel */
.control-client {
    flex-direction: row;
    border-top: 1px solid #b2bfcd;
    background: #fff;
}
.tasks {
    width: 200px;
    display: flex;
    flex-direction: column;
    gap: 7px;
    padding: 13px 29px;
    color: #17285f;
    white-space: nowrap;
    background: linear-gradient(100deg, #eef3fb, #dde6f6);
}
.tasks .first {
    margin-top: 13px;
}
.account {
    flex: 1;
    padding: 1px 11px 0 23px;
}
.help {
    width: 16px;
    height: 16px;
    margin: 0 -9px 0 auto;
}
.account-main {
    display: flex;
    justify-content: space-between;
}
.account h1 {
    margin-top: 2px;
    font-size: 15px;
    line-height: 22px;
    color: #1c3287;
}
.account a {
    display: block;
    margin: 19px 0 0 22px;
    color: #1260ae;
}
.tile {
    width: 240px;
    height: 87px;
    margin-top: 36px;
    padding: 13px 14px;
    border: 1px solid #c3d2e0;
    border-radius: 2px;
    background: linear-gradient(#fbfdff, #eef5fd);
}
.tile svg {
    width: 60px;
    height: 60px;
}

/* Explorer */
.toolbar {
    display: flex;
    align-items: center;
    height: 31px;
    padding-left: 5px;
    border-bottom: 1px solid #a0b4cc;
    background: linear-gradient(#fafcfe, #eaf1fa 48%, #dce7f5 52%, #e1ebf7);
    color: #1e3350;
}
.toolbar button {
    display: flex;
    align-items: center;
    gap: 5px;
    padding: 0 13px;
}
.toolbar-right {
    display: flex;
    margin-left: auto;
}
.toolbar-right button {
    padding: 0 15px 0 6px;
    gap: 9px;
}
.views {
    width: 16px;
    height: 13px;
}
.pane {
    width: 16px;
    height: 14px;
}
.split {
    flex: 1;
    display: flex;
    min-height: 0;
}
.tree {
    width: 159px;
    padding: 9px 1px 0;
    border-right: 1px solid #d8e3f0;
}
.tree a {
    display: flex;
    align-items: center;
    gap: 5px;
    height: 21px;
    padding-left: 19px;
}
.tree svg {
    width: 16px;
    height: 16px;
}
.tree .sub {
    padding-left: 29px;
}
.tree .last {
    margin-bottom: 21px;
}
.tree .current {
    padding-left: 28px;
    border: 1px solid #dcdcdc;
    border-radius: 2px;
    background: linear-gradient(#fafafa, #e6e6e6);
}
.files {
    flex: 1;
    padding-left: 15px;
}
.files table {
    width: 574px;
    table-layout: fixed;
    border-collapse: separate;
    border-spacing: 0;
    color: #6d6d6d;
}
.files th {
    position: relative;
    height: 31px;
    padding: 0 0 6px 6px;
    text-align: left;
    font-weight: normal;
    color: #56606c;
}
.files th::after {
    content: "";
    position: absolute;
    top: 1px;
    right: 0;
    width: 1px;
    height: 22px;
    background: #e1e7ee;
}
.files th:last-child::after {
    right: -3px;
}
.files .name {
    width: 258px;
    padding-left: 3px;
}
.files .date, .files .type {
    width: 120px;
}
.files .sorted::before {
    content: "";
    position: absolute;
    top: 1px;
    left: 123px;
    border: 4px solid transparent;
    border-top: 0;
    border-bottom-color: #5f7f9c;
}
.files td {
    height: 21px;
    padding: 0 0 0 6px;
    white-space: nowrap;
    overflow: hidden;
}
.files td:first-child {
    display: flex;
    align-items: center;
    gap: 4px;
    padding-left: 4px;
    color: #000;
}
.files td:nth-child(2) {
    padding-left: 5px;
}
.files td:last-child {
    padding: 0 4px 0 0;
    text-align: right;
}
.files svg {
    width: 16px;
    height: 16px;
}
.selected td {
    border: solid #7da2ce;
    border-width: 1px 0;
    background: linear-gradient(#dfeafb, #c1dafa);
}
.selected td:first-child {
    padding-left: 3px;
    border-left-width: 1px;
    border-radius: 3px 0 0 3px;
}
.selected td:last-child {
    border-right-width: 1px;
    border-radius: 0 3px 3px 0;
}
.cursor {
    position: absolute;
    top: 496px;
    left: 13px;
    width: 13px;
    height: 20px;
}

/* Taskbar */
.taskbar {
    display: flex;
    height: 40px;
    border-top: 1px solid #26313f;
    background: linear-gradient(90deg, #8593a8, #93a3ba 50px, #a7bddb 110px, #a9c2e2 60%, #a9c0dc 78%, #7f8ea1 88%, #7c8a9d);
    box-shadow: inset 0 1px 0 rgba(255, 255, 255, 0.5);
}
.start {
    width: 54px;
    display: flex;
    align-items: center;
    justify-content: center;
}
.start svg {
    width: 38px;
    height: 38px;
}
.tasklist {
    display: flex;
    gap: 4px;
    margin-left: 6px;
}
.task {
    position: relative;
    width: 58px;
    display: flex;
    align-items: center;
    justify-content: center;
}
.task.open {
    border: 1px solid #45566d;
    border-radius: 3px;
    background: linear-gradient(135deg, #dde7f3, #b5c9e2 60%, #bed1e8);
    box-shadow: inset 0 0 0 1px rgba(255, 255, 255, 0.6);
}
.task.active {
    background: linear-gradient(135deg, #dfe5ee, #f1f4f9 50%, #dfe8f2);
}
.task.stack {
    padding-right: 4px;
}
.task.stack::after {
    content: "";
    position: absolute;
    top: 1px;
    bottom: 1px;
    right: 3px;
    width: 2px;
    border: solid #5a6c84;
    border-width: 0 0 0 1px;
    background: #e5eef8;
}
.task svg {
    width: 36px;
    height: 32px;
}
.tray {
    margin-left: auto;
    display: flex;
    align-items: center;
    gap: 8px;
    color: #fff;
}
.tray svg {
    width: 16px;
    height: 14px;
}
.clock {
    width: 72px;
    text-align: center;
}
.clock time {
    display: block;
}
.peek {
    width: 14px;
    border: 1px solid #566271;
    background: linear-gradient(135deg, #9aa6b5, #5a6675 50%, #8693a3);
}
```
